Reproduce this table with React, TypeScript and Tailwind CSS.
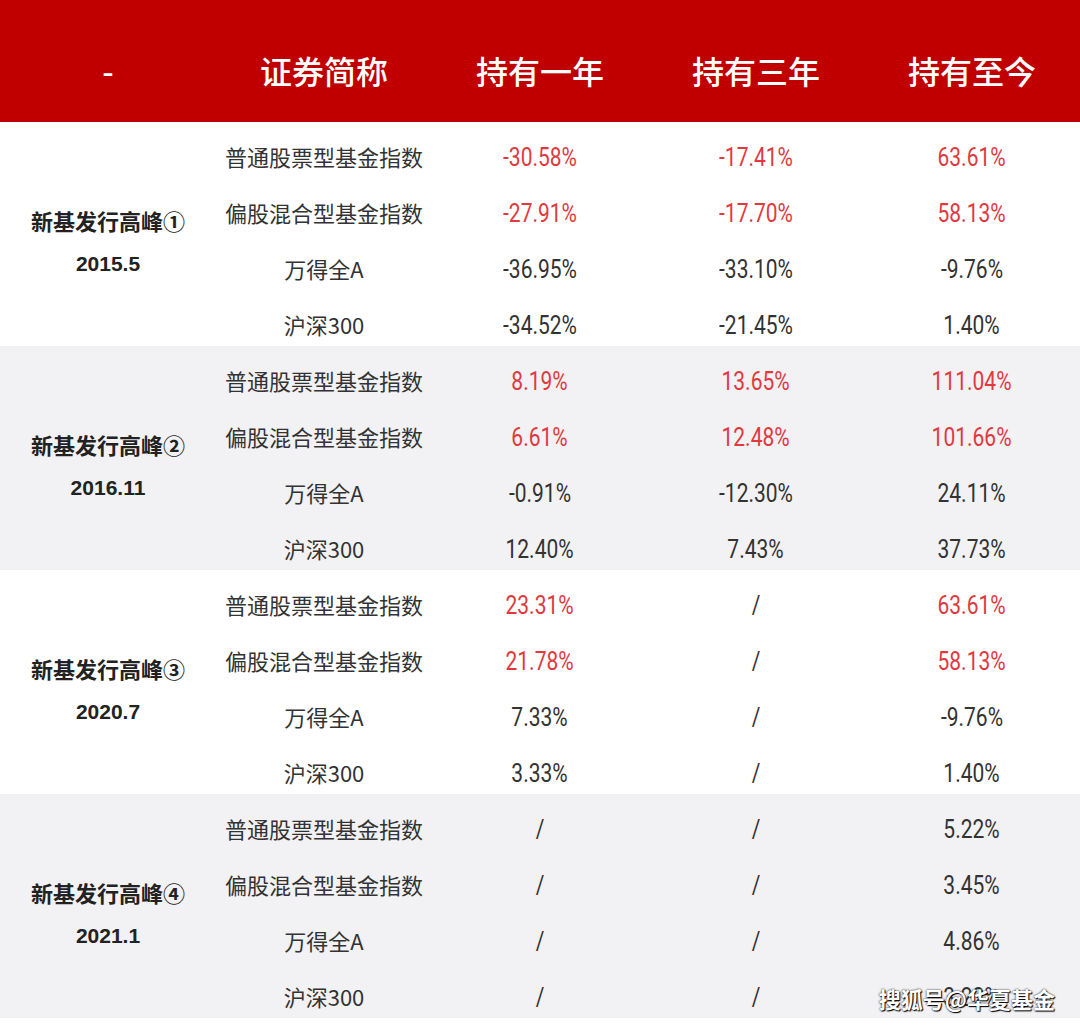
const groups = [
  {
    name: "新基发行高峰①",
    date: "2015.5",
    bg: "bg-white",
    rows: [
      ["普通股票型基金指数", "-30.58%", "-17.41%", "63.61%", true],
      ["偏股混合型基金指数", "-27.91%", "-17.70%", "58.13%", true],
      ["万得全A", "-36.95%", "-33.10%", "-9.76%", false],
      ["沪深300", "-34.52%", "-21.45%", "1.40%", false],
    ],
  },
  {
    name: "新基发行高峰②",
    date: "2016.11",
    bg: "bg-[#f2f1f4]",
    rows: [
      ["普通股票型基金指数", "8.19%", "13.65%", "111.04%", true],
      ["偏股混合型基金指数", "6.61%", "12.48%", "101.66%", true],
      ["万得全A", "-0.91%", "-12.30%", "24.11%", false],
      ["沪深300", "12.40%", "7.43%", "37.73%", false],
    ],
  },
  {
    name: "新基发行高峰③",
    date: "2020.7",
    bg: "bg-white",
    rows: [
      ["普通股票型基金指数", "23.31%", "/", "63.61%", true],
      ["偏股混合型基金指数", "21.78%", "/", "58.13%", true],
      ["万得全A", "7.33%", "/", "-9.76%", false],
      ["沪深300", "3.33%", "/", "1.40%", false],
    ],
  },
  {
    name: "新基发行高峰④",
    date: "2021.1",
    bg: "bg-[#f2f1f4]",
    rows: [
      ["普通股票型基金指数", "/", "/", "5.22%", false],
      ["偏股混合型基金指数", "/", "/", "3.45%", false],
      ["万得全A", "/", "/", "4.86%", false],
      ["沪深300", "/", "/", "3.22%", false],
    ],
  },
] as const;

const cjk = "font-['Noto_Sans_CJK_SC','Noto_Sans',sans-serif]";

function Num({ v, red }: { v: string; red: boolean }) {
  return (
    <div className="w-[216px] flex justify-center items-center pt-[4px]">
      <span
        className={`inline-block scale-x-[0.84] font-['Roboto','Noto_Sans',sans-serif] text-[25px] ${
          red && v !== "/" ? "text-[#e03a3e]" : "text-[#333]"
        }`}
      >
        {v}
      </span>
    </div>
  );
}

export default function App() {
  return (
    <div className={`w-[1080px] h-[1027px] bg-white relative overflow-hidden ${cjk}`}>
      <div className="h-[122px] bg-[#c00000] flex items-end pb-[36px] text-white text-[32px] font-medium leading-none">
        {["-", "证券简称", "持有一年", "持有三年", "持有至今"].map((h) => (
          <div key={h} className="w-[216px] text-center">
            {h}
          </div>
        ))}
      </div>

      {groups.map((g) => (
        <div key={g.name} className={`flex h-[224px] ${g.bg}`}>
          <div className="w-[216px] flex flex-col items-center justify-center pt-[14px] gap-[22px] text-[#222] font-bold">
            <div className="text-[22px] leading-none">{g.name}</div>
            <div className="text-[21px] leading-none font-['Liberation_Sans',sans-serif]">{g.date}</div>
          </div>
          <div className="flex flex-col">
            {g.rows.map((r) => (
              <div key={r[0]} className="flex h-[56px] items-center pt-[12px]">
                <div className="w-[216px] text-center text-[22px] leading-none text-[#333]">{r[0]}</div>
                <Num v={r[1]} red={r[4]} />
                <Num v={r[2]} red={r[4]} />
                <Num v={r[3]} red={r[4]} />
              </div>
            ))}
          </div>
        </div>
      ))}

      <div className="absolute right-[25px] bottom-[12px] text-white text-[22px] font-bold [text-shadow:0_0_2px_#000,1px_1px_1px_#000]">
        搜狐号@华夏基金
      </div>
    </div>
  );
}
